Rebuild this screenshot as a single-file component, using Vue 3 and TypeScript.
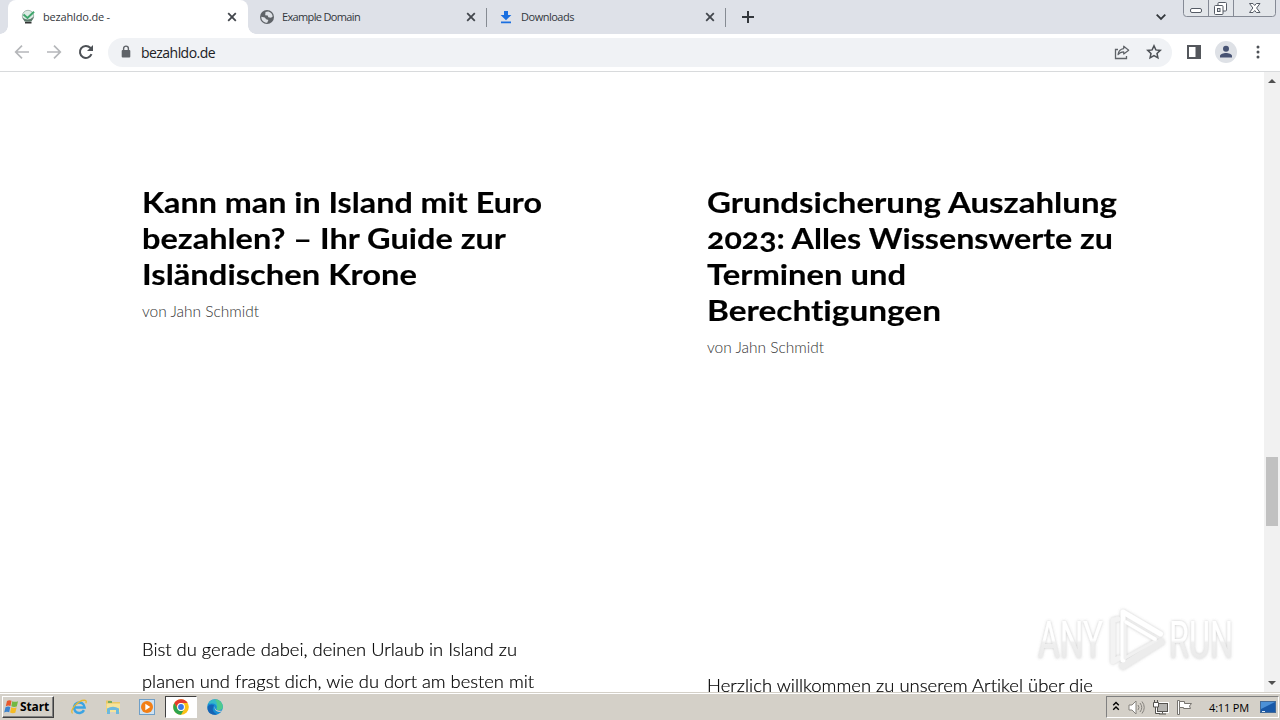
<script setup lang="ts">
interface Line {
  text: string
  width: number
}
interface Tab {
  title: Line
  icon: 'site' | 'globe' | 'download'
  active: boolean
}
interface Article {
  id: string
  heading: Line[]
  excerpt: Line[]
}

const tabs: Tab[] = [
  { title: { text: 'bezahldo.de -', width: 67 }, icon: 'site', active: true },
  { title: { text: 'Example Domain', width: 78 }, icon: 'globe', active: false },
  { title: { text: 'Downloads', width: 53 }, icon: 'download', active: false },
]

const articles: Article[] = [
  {
    id: 'island',
    heading: [
      { text: 'Kann man in Island mit Euro', width: 400 },
      { text: 'bezahlen? – Ihr Guide zur', width: 364 },
      { text: 'Isländischen Krone', width: 275 },
    ],
    excerpt: [
      { text: 'Bist du gerade dabei, deinen Urlaub in Island zu', width: 375 },
      { text: 'planen und fragst dich, wie du dort am besten mit', width: 392 },
    ],
  },
  {
    id: 'grundsicherung',
    heading: [
      { text: 'Grundsicherung Auszahlung', width: 410 },
      { text: '2023: Alles Wissenswerte zu', width: 406 },
      { text: 'Terminen und', width: 199 },
      { text: 'Berechtigungen', width: 234 },
    ],
    excerpt: [{ text: 'Herzlich willkommen zu unserem Artikel über die', width: 386 }],
  },
]

const author: Line = { text: 'von Jahn Schmidt', width: 117 }
const address: Line = { text: 'bezahldo.de', width: 74 }
const clock: Line = { text: '4:11 PM', width: 40 }
const start: Line = { text: 'Start', width: 29 }

// Tracks each line so that it fills its measured width.
const vFit = {
  mounted(el: HTMLElement, binding: { value: number }) {
    const natural = el.getBoundingClientRect().width
    const count = (el.textContent ?? '').length
    if (count > 1) el.style.letterSpacing = `${(binding.value - natural) / count}px`
  },
}

// Widens the glyphs themselves, keeping the line's own spacing.
const vStretch = {
  mounted(el: HTMLElement, binding: { value: number }) {
    const natural = el.getBoundingClientRect().width
    if (natural > 0) el.style.transform = `scaleX(${binding.value / natural})`
  },
}
</script>

<template>
  <div class="screen">
    <header class="tabstrip">
      <div v-for="tab in tabs" :key="tab.title.text" class="tab" :class="{ active: tab.active }">
        <svg v-if="tab.icon === 'site'" class="favicon" viewBox="0 0 16 16">
          <circle cx="8" cy="7" r="5.7" fill="#dcebe4" stroke="#a9bab3" />
          <path d="M2.500 8.500 Q8 13 14 7.500 L11.500 12.500 H4.500Z" fill="#5d7a6c" />
          <path d="M3.500 5.500 L7.500 9 L14 2.800" fill="none" stroke="#3fa66c" stroke-width="2" />
          <path d="M5 13.700h6.500" stroke="#333" stroke-width="1.600" />
        </svg>
        <svg v-else-if="tab.icon === 'globe'" class="favicon" viewBox="0 0 16 16">
          <circle cx="8" cy="8" r="7" fill="#5f6368" />
          <path d="M2.300 7.700 L5.800 8.500 L7.200 10.200 L9.400 11 L8.200 13.700 C4.700 13.700 2.200 11.200 2.300 7.700Z M6.500 3 L9.200 2.400 C11.800 3 13.400 5 13.700 7.400 L12 8.700 L9.300 8.200 L8.700 6.600 L6.200 6.300Z" fill="#dee1e6" />
        </svg>
        <svg v-else class="favicon" viewBox="0 0 16 16">
          <path d="M6 2h4v4h3.400L8 11.200 2.600 6H6z M3 12.500h10v1.700H3z" fill="#1a6fe0" />
        </svg>
        <span class="tab-title"><span v-fit="tab.title.width">{{ tab.title.text }}</span></span>
        <svg class="close" viewBox="0 0 10 10"><path d="M1.200 1.200l7.600 7.600M8.800 1.200L1.200 8.800" /></svg>
      </div>
      <svg class="new-tab" viewBox="0 0 14 14"><path d="M7 1v12M1 7h12" /></svg>
      <span class="grow"></span>
      <svg class="tab-search" viewBox="0 0 12 8"><path d="M1.700 1.700L6 6l4.300-4.300" /></svg>
      <svg class="window-buttons" viewBox="0 0 94 18">
        <path d="M.5 0V13.500Q.5 16.500 3.500 16.500H89.500Q92.500 16.500 92.500 13.500V0" fill="#e3e6ea" stroke="#858a95" />
        <path d="M25.500 0V16M50.500 0V16" stroke="#858a95" />
        <rect x="7.500" y="8.500" width="11" height="4" rx="1.500" fill="#fff" stroke="#555b65" />
        <rect x="35" y="2.500" width="8.500" height="8.500" rx="1" fill="#fff" stroke="#555b65" />
        <rect x="31.500" y="5.500" width="8.500" height="9" rx="1" fill="#fff" stroke="#555b65" />
        <rect x="34.500" y="8.500" width="2.500" height="3" fill="#e3e6ea" stroke="#555b65" />
        <path d="M66.500 3.500h3.500l1.700 2 1.700-2H77L73.600 8l3.400 4.500h-3.600l-1.700-2-1.700 2h-3.500L69.900 8z" fill="#fff" stroke="#555b65" />
      </svg>
    </header>

    <div class="toolbar">
      <svg class="nav" viewBox="0 0 16 16"><path d="M15 8H2M8 1.700L1.700 8 8 14.300" fill="none" stroke="#b5b7ba" stroke-width="1.700" /></svg>
      <svg class="nav" viewBox="0 0 16 16"><path d="M1 8h13M8 1.700L14.300 8 8 14.300" fill="none" stroke="#b5b7ba" stroke-width="1.700" /></svg>
      <svg class="nav" viewBox="0 0 16 16">
        <path d="M13.500 10.200A6 6 0 1 1 12.300 3.800L14 5.500" fill="none" stroke="#4d5156" stroke-width="2" />
        <path d="M15 1v6H9z" fill="#4d5156" />
      </svg>
      <div class="omnibox">
        <svg class="lock" viewBox="0 0 10 14">
          <path d="M2.600 6V3.500a2.400 2.400 0 0 1 4.800 0V6" fill="none" stroke="#5f6368" stroke-width="1.400" />
          <rect x=".7" y="5" width="8.600" height="7.500" rx="1" fill="#5f6368" />
        </svg>
        <span class="url"><span v-fit="address.width">{{ address.text }}</span></span>
        <svg class="share" viewBox="0 0 16 16">
          <path d="M4 5.500H1.500v9h11V12" fill="none" stroke="#5f6368" stroke-width="1.300" />
          <path d="M9.700 2.200L14.700 6.200 9.700 10V7.800C7 7.800 5.400 8.700 4 10.700 4.400 7.200 6.300 5 9.700 4.600z" fill="none" stroke="#5f6368" stroke-width="1.200" stroke-linejoin="round" />
        </svg>
        <svg class="star" viewBox="0 0 16 16">
          <path d="M8 1.800l1.850 4.100 4.450.5-3.300 3 .9 4.400L8 11.600l-3.900 2.200.9-4.400-3.300-3 4.450-.5z" fill="none" stroke="#4d5156" stroke-width="1.500" />
        </svg>
      </div>
      <svg class="panel" viewBox="0 0 16 16"><path d="M1 1h14v14H1zM3 3v10h6.500V3z" fill="#54575c" fill-rule="evenodd" /></svg>
      <svg class="avatar" viewBox="0 0 22 22">
        <circle cx="11" cy="11" r="11" fill="#dee1e6" />
        <circle cx="11" cy="7.700" r="3" fill="#475373" />
        <path d="M5 16.500v-1.500c0-2 3.500-3 6-3s6 1 6 3v1.500z" fill="#475373" />
      </svg>
      <svg class="menu" viewBox="0 0 4 14"><circle cx="2" cy="2" r="1.500" /><circle cx="2" cy="7" r="1.500" /><circle cx="2" cy="12" r="1.500" /></svg>
    </div>

    <div class="viewport">
      <main class="page">
        <article v-for="article in articles" :key="article.id" class="card">
          <h2>
            <span v-for="line in article.heading" :key="line.text" class="row"><span v-stretch="line.width" class="wide">{{ line.text }}</span></span>
          </h2>
          <div class="author"><span v-fit="author.width">{{ author.text }}</span></div>
          <p>
            <span v-for="line in article.excerpt" :key="line.text" class="row"><span v-stretch="line.width" class="wide">{{ line.text }}</span></span>
          </p>
        </article>
      </main>
      <aside class="scrollbar">
        <svg class="arrow" viewBox="0 0 8 4"><path d="M0 4L4 0l4 4z" /></svg>
        <span class="thumb"></span>
        <svg class="arrow" viewBox="0 0 8 4"><path d="M0 0l4 4 4-4z" /></svg>
      </aside>
      <svg class="watermark" viewBox="0 0 214 80">
        <defs>
          <linearGradient id="fade" x1="0" y1="18" x2="0" y2="62" gradientUnits="userSpaceOnUse">
            <stop offset="0" stop-color="#fff" />
            <stop offset=".5" stop-color="#fff" />
            <stop offset=".56" stop-color="#efefef" />
            <stop offset="1" stop-color="#e9e9e9" />
          </linearGradient>
          <filter id="halo" x="-10%" y="-10%" width="120%" height="120%">
            <feDropShadow dx="0" dy="0" stdDeviation="1.700" flood-color="#777" flood-opacity=".42" />
          </filter>
        </defs>
        <g filter="url(#halo)">
          <g fill="url(#fade)">
            <text x="8" y="58" textLength="65" lengthAdjust="spacingAndGlyphs">ANY</text>
            <text x="139" y="58" textLength="64" lengthAdjust="spacingAndGlyphs">RUN</text>
          </g>
          <g fill="none" stroke-linejoin="round" stroke-linecap="round">
            <path d="M88 19l-5 1.500v41l6-3.500" stroke="#f3f3f3" stroke-width="5" />
            <path d="M131 42L93 66" stroke="#ececec" stroke-width="7" />
            <path d="M93 60V12L130.500 34" stroke="#fff" stroke-width="5" />
            <path d="M95 58V22L126 40.500z" stroke="#f1f1f1" stroke-width="3" />
            <path d="M96 22l29 17" stroke="#fff" stroke-width="3.500" />
          </g>
        </g>
      </svg>
    </div>

    <footer class="taskbar">
      <div class="start">
        <svg class="flag" viewBox="0 0 17 16">
          <path d="M4 2q2-1.500 4.500-.3L7.500 7Q5 6 2.800 7.200z" fill="#e8582b" />
          <path d="M9.300 2.200Q12 3.500 15 2.200l-1.200 5.300q-3 1-5.500-.2z" fill="#72b842" />
          <path d="M2.500 8.200Q5 7 7.300 8l-1.100 5.200q-2.400-1.200-5 .2z" fill="#3c83ce" />
          <path d="M8.200 8.300q2.600 1.300 5.400.3l-1.300 5.200q-2.800 1-5.200-.3z" fill="#f5bb25" />
        </svg>
        <b v-fit="start.width">{{ start.text }}</b>
      </div>
      <div class="launch">
        <svg viewBox="0 0 18 18">
          <path d="M14 12.200A5.300 5.300 0 1 1 14.600 9.500H5" fill="none" stroke="#3ba4e3" stroke-width="2.500" />
          <path d="M2.500 15.500C-1 13 8 1.500 15.300 2.300q1.500.5.5 3" fill="none" stroke="#e7b82f" stroke-width="1.300" />
        </svg>
      </div>
      <div class="launch">
        <svg viewBox="0 0 18 18">
          <path d="M2 2.500h5l1 1.500h8V14H2z" fill="#e9c765" />
          <path d="M2.500 5.500h13.500V14H2.500z" fill="#f6e39a" />
          <path d="M3 16v-5.500q6-3.500 12 0V16h-3v-4H6v4z" fill="#6db9dd" />
          <path d="M4 4h4" stroke="#53a15e" stroke-width="1.500" />
        </svg>
      </div>
      <div class="launch">
        <svg viewBox="0 0 18 18">
          <rect x="1.500" y="1.500" width="15" height="15" fill="#cfe2f2" stroke="#6f9fc7" />
          <circle cx="9" cy="9" r="6" fill="#f27f16" />
          <path d="M7.300 5.700v6.600l5-3.300z" fill="#fff" />
        </svg>
      </div>
      <div class="launch pressed">
        <svg viewBox="0 0 18 18">
          <circle cx="9" cy="9" r="7.800" fill="#fbc116" />
          <path d="M2.250 5.100A7.800 7.800 0 0 1 15.750 5.100H9A3.750 3.750 0 0 0 5.750 10.900z" fill="#e33b2e" />
          <path d="M2.250 5.100A7.800 7.800 0 0 0 9 16.800l3.250-5.900A3.750 3.750 0 0 1 5.750 10.900z" fill="#2da44e" />
          <circle cx="9" cy="9" r="3.900" fill="#fff" /><circle cx="9" cy="9" r="2.900" fill="#3978e7" />
        </svg>
      </div>
      <div class="launch">
        <svg viewBox="0 0 18 18">
          <circle cx="9" cy="9" r="7.800" fill="#168dd5" />
          <path d="M2 6A7.800 7.800 0 0 1 16.800 9q0 3-4 3-3 0-2-2Q11 6 7 5.500 4 5.200 2 6z" fill="#35b9c9" />
          <path d="M9 1.200A7.800 7.800 0 0 1 16.800 9q0 3-4 3-3 0-2-2 1.200-4-1.800-8.800z" fill="#4fca8e" />
          <path d="M7.500 8.500Q5 13 11 16.500C3 17.800.5 12 2 8q2.500-2.600 6-1z" fill="#1664b5" />
          <path d="M9 8.300q-1 5 7.300 4.500-2.500 2-5 .8Q7.500 11.500 9 8.300z" fill="#d4d0c8" />
        </svg>
      </div>
      <span class="grow"></span>
      <div class="tray">
        <svg class="chevrons" viewBox="0 0 8 10"><path d="M1.200 4.200L4 1.500l2.800 2.700M1.200 8.700L4 6l2.800 2.700" /></svg>
        <svg class="tray-icon" viewBox="0 0 17 17">
          <path d="M1 6h3l4-4v13l-4-4H1z" fill="#fff" stroke="#85827d" />
          <path d="M10 6q2 2.500 0 5M12 4q3.500 4.500 0 9M14 2.500q4.500 6 0 12" fill="none" stroke="#85827d" />
        </svg>
        <svg class="tray-icon" viewBox="0 0 17 17">
          <path d="M5.500 4.500h10v8h-10z" fill="#b5b4b1" stroke="#fff" stroke-width="3" />
          <rect x="5.500" y="4.500" width="10" height="8" fill="#b5b4b1" stroke="#55534f" />
          <path d="M7 15h7M10.500 13v1.500M3.500 8v6.500H8" fill="none" stroke="#55534f" />
          <path d="M1.500 3.500h5V8h-5zM2.500 1v2M5.500 1v2" fill="#fff" stroke="#55534f" />
        </svg>
        <svg class="tray-icon" viewBox="0 0 17 17">
          <path d="M1.500 1.500h2v14h-2z" fill="#fff" stroke="#77746f" />
          <path d="M3.500 2.500h5v2h7L13.500 7l1 2.500h-7v-1h-4z" fill="#fff" stroke="#77746f" />
        </svg>
        <span class="clock"><span v-fit="clock.width">{{ clock.text }}</span></span>
        <svg class="desktop" viewBox="0 0 16 13">
          <rect x=".5" y=".5" width="15" height="11" fill="#1959a8" stroke="#426a98" />
          <path d="M1 1h14L1 8z" fill="#4c91d7" /><path d="M2 10.500h3" stroke="#dceaf6" />
        </svg>
      </div>
    </footer>
  </div>
</template>

<style>
body {
  margin: 0;
  overflow: hidden;
}
</style>

<style scoped>
.screen {
  display: flex;
  flex-direction: column;
  width: 1280px;
  height: 720px;
  overflow: hidden;
  background: #fff;
  font-family: 'Open Sans', 'Noto Sans', sans-serif;
  white-space: nowrap;
}
svg {
  display: block;
  flex: none;
}
.grow {
  flex: 1;
}
.tabstrip {
  display: flex;
  flex: none;
  height: 34px;
  box-sizing: border-box;
  padding-left: 8px;
  background: #dee1e8;
}
.tab {
  position: relative;
  display: flex;
  align-items: center;
  box-sizing: border-box;
  width: 239px;
  height: 34px;
  padding: 0 11px 0 12px;
  color: #33373c;
  font-size: 11px;
}
.tab.active {
  width: 240px;
  background: #fff;
  border-radius: 8px 8px 0 0;
}
.tab.active::before,
.tab.active::after {
  content: '';
  position: absolute;
  bottom: 0;
  width: 8px;
  height: 8px;
}
.tab.active::before {
  left: -8px;
  background: radial-gradient(circle at 0 0, transparent 7.5px, #fff 8px);
}
.tab.active::after {
  right: -8px;
  background: radial-gradient(circle at 100% 0, transparent 7.5px, #fff 8px);
}
.tab:not(.active)::after {
  content: '';
  position: absolute;
  right: 0;
  top: 8px;
  width: 1px;
  height: 19px;
  background: #868b93;
}
.favicon {
  width: 16px;
  height: 16px;
}
.tab:not(.active) .favicon {
  margin-left: -1px;
}
.tab-title {
  flex: 1;
  margin-left: 7px;
  line-height: 16px;
}
.close {
  width: 10px;
  height: 10px;
}
.close path {
  stroke: #42464c;
  stroke-width: 1.8;
}
.new-tab {
  width: 14px;
  height: 14px;
  margin: 10px 0 0 15px;
}
.new-tab path {
  stroke: #33373c;
  stroke-width: 2;
}
.tab-search {
  width: 12px;
  height: 8px;
  margin: 13px 16px 0 0;
}
.tab-search path {
  fill: none;
  stroke: #33373c;
  stroke-width: 1.8;
}
.window-buttons {
  width: 94px;
  height: 18px;
  margin-right: 3px;
}
.toolbar {
  display: flex;
  flex: none;
  align-items: center;
  box-sizing: border-box;
  height: 38px;
  padding: 0 20px 1px 14px;
  border-bottom: 1px solid #d8dadc;
}
.nav {
  width: 16px;
  height: 16px;
  margin-right: 16px;
}
.nav:nth-child(3) {
  margin-right: 14px;
}
.omnibox {
  display: flex;
  flex: 1;
  align-items: center;
  box-sizing: border-box;
  height: 29px;
  padding: 0 10px 0 13px;
  border-radius: 15px;
  background: #f0f2f5;
}
.lock {
  width: 10px;
  height: 14px;
}
.url {
  flex: 1;
  margin-left: 10px;
  padding-top: 1px;
  color: #202124;
  font-size: 14px;
  line-height: 20px;
}
.share,
.star,
.panel {
  width: 16px;
  height: 16px;
}
.star {
  margin-left: 16px;
}
.panel {
  margin-left: 14px;
}
.avatar {
  width: 22px;
  height: 22px;
  margin-left: 13px;
}
.menu {
  width: 4px;
  height: 14px;
  margin-left: 19px;
  fill: #4d5156;
}
.viewport {
  position: relative;
  display: flex;
  flex: none;
  height: 620px;
  overflow: hidden;
}
.page {
  display: grid;
  flex: 1;
  grid-template-columns: 565px 1fr;
  box-sizing: border-box;
  padding: 112px 0 0 142px;
  font-family: Lato, 'Open Sans', sans-serif;
  font-variant-ligatures: none;
}
h2 {
  margin: 0;
  color: #000;
  font-size: 29px;
  font-weight: 700;
  font-feature-settings: 'onum';
  line-height: 36px;
  -webkit-text-stroke: 0.15px #000;
}
.row {
  display: block;
}
.wide {
  display: inline-block;
  transform-origin: 0 50%;
}
.author {
  margin-top: 8px;
  color: #333;
  font-size: 15.5px;
  font-weight: 300;
  line-height: 22px;
}
p {
  margin: 312px 0 0;
  color: #000;
  font-size: 17px;
  font-weight: 300;
  line-height: 32px;
  -webkit-text-stroke: 0.2px #000;
}
.scrollbar {
  display: flex;
  flex-direction: column;
  align-items: center;
  box-sizing: border-box;
  width: 16px;
  padding: 7px 0;
  background: #f1f1f1;
}
.arrow {
  width: 8px;
  height: 4px;
  fill: #505050;
}
.thumb {
  width: 12px;
  height: 69px;
  margin-top: 374px;
  margin-bottom: auto;
  background: #c1c1c1;
}
.watermark {
  position: absolute;
  left: 1030px;
  top: 528px;
  width: 214px;
  height: 80px;
}
.watermark text {
  font-family: Roboto, sans-serif;
  font-size: 51px;
}
.taskbar {
  position: relative;
  display: flex;
  flex: none;
  align-items: center;
  box-sizing: border-box;
  height: 28px;
  padding-top: 2px;
  background: #d4d0c8;
  box-shadow: inset 0 1px #d4d0c8, inset 0 2px #fff;
}
.start {
  display: flex;
  align-items: center;
  box-sizing: border-box;
  width: 52px;
  height: 22px;
  margin: 0 10px 0 2px;
  border: 1px solid;
  border-color: #fff #404040 #404040 #fff;
  box-shadow: inset -1px -1px #808080;
  color: #000;
  font-size: 12px;
}
.start b {
  position: relative;
  top: -1px;
}
.flag {
  width: 17px;
  height: 16px;
}
.launch {
  display: grid;
  place-items: center;
  box-sizing: border-box;
  width: 30px;
  height: 22px;
  margin-right: 4px;
}
.launch svg {
  width: 18px;
  height: 18px;
}
.launch.pressed {
  width: 32px;
  margin: 0 3px 0 -1px;
  border: 1px solid;
  border-color: #404040 #fff #fff #404040;
  background: #fff;
}
.tray {
  display: flex;
  align-items: center;
  box-sizing: border-box;
  width: 173px;
  height: 22px;
  margin-right: 1px;
  padding-left: 5px;
  border: 1px solid;
  border-color: #808080 #fff #fff #808080;
}
.chevrons {
  width: 8px;
  height: 10px;
  margin: 0 8px 3px 0;
}
.chevrons path {
  fill: none;
  stroke: #000;
  stroke-width: 1.4;
}
.tray-icon {
  width: 17px;
  height: 17px;
  margin-right: 7px;
}
.clock {
  width: 40px;
  margin-left: 9px;
  color: #000;
  font-size: 11px;
}
.desktop {
  width: 16px;
  height: 13px;
  margin-left: 11px;
}
</style>
